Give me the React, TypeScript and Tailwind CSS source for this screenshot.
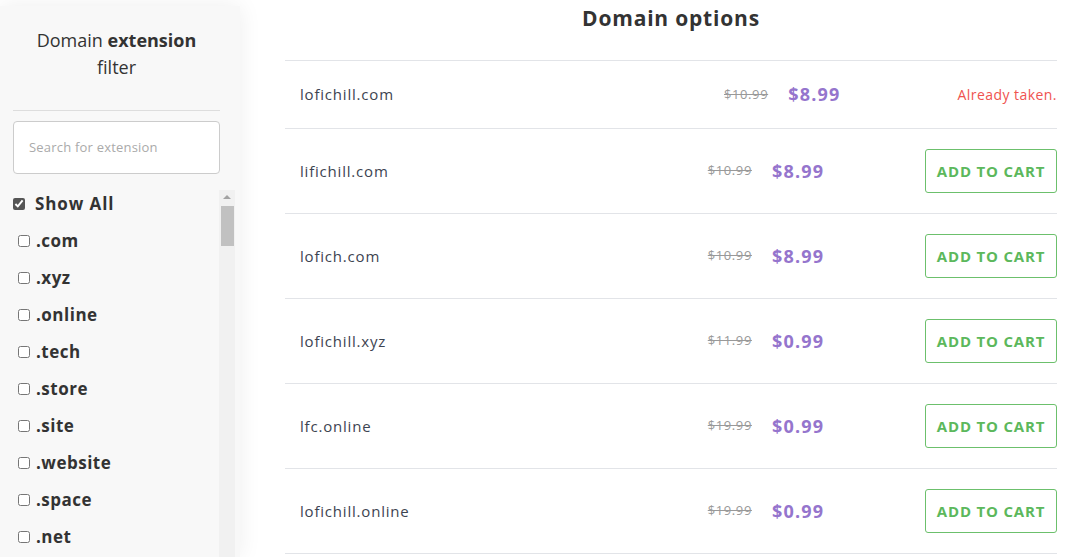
import React from "react";

const font = { fontFamily: '"Open Sans", "Liberation Sans", sans-serif' };

const exts = [".com", ".xyz", ".online", ".tech", ".store", ".site", ".website", ".space", ".net"];

const rows = [
  { name: "lofichill.com", old: "$10.99", price: "$8.99", taken: true },
  { name: "lifichill.com", old: "$10.99", price: "$8.99" },
  { name: "lofich.com", old: "$10.99", price: "$8.99" },
  { name: "lofichill.xyz", old: "$11.99", price: "$0.99" },
  { name: "lfc.online", old: "$19.99", price: "$0.99" },
  { name: "lofichill.online", old: "$19.99", price: "$0.99" },
];

export default function App() {
  return (
    <div className="flex h-[557px] w-[1075px] overflow-hidden bg-white text-[#333]" style={font}>
      <aside className="mt-[6px] flex w-[240px] shrink-0 flex-col bg-[#f8f8f8] shadow-[0_0_22px_rgba(0,0,0,0.07)]">
        <div className="pr-[7px]">
          <h2 className="pt-[21px] text-center text-[18px] leading-[27px] text-[#333]">
            Domain <b className="font-bold">extension</b>
            <br />
            filter
          </h2>
          <div className="mx-[13px] mt-[29px] border-t border-[#dddddd]" />
          <div className="mx-[13px] mt-[10px] flex h-[53px] items-center rounded-[4px] border border-[#cccccc] bg-white px-[15px] text-[13px] tracking-[0.2px] text-[#aaaaaa]">
            Search for extension
          </div>
        </div>
        <div className="mt-[16px] flex min-h-0 flex-1">
          <div className="-mt-[5px] flex-1 pl-[13px]">
            <label className="flex h-[37px] items-center gap-[10px]">
              <input type="checkbox" defaultChecked className="m-0 h-[12px] w-[12px] accent-[#555]" />
              <span className="text-[17px] font-bold tracking-[0.9px] text-[#333]">Show All</span>
            </label>
            {exts.map((e) => (
              <label key={e} className="flex h-[37px] items-center gap-[6px] pl-[5px]">
                <input type="checkbox" className="m-0 h-[12px] w-[12px]" />
                <span className="text-[17px] font-bold tracking-[0.5px] text-[#333]">{e}</span>
              </label>
            ))}
          </div>
          <div className="mr-[5px] flex w-[16px] flex-col items-center bg-[#f1f1f1]">
            <div className="mt-[5px] h-0 w-0 border-x-[4px] border-b-[4px] border-x-transparent border-b-[#a3a3a3]" />
            <div className="mt-[7px] h-[40px] w-[13px] bg-[#c1c1c1]" />
          </div>
        </div>
      </aside>

      <main className="ml-[45px] mr-[18px] flex-1">
        <h1 className="h-[60px] pt-[4px] text-center text-[21px] font-bold leading-[28px] tracking-[0.8px] text-[#333]">
          Domain options
        </h1>
        {rows.map((r) => (
          <div key={r.name} className="flex items-center border-t border-[#e2e4e8] py-[20px]">
            <div className="w-[322px] pl-[15px] text-[15px] leading-[27px] tracking-[0.8px] text-[#3d4451]">{r.name}</div>
            <div className="flex flex-1 items-center justify-center gap-[20px]">
              <span className="text-[13px] tracking-[0.6px] text-[#999] line-through">{r.old}</span>
              <span className="text-[18px] font-bold tracking-[1.2px] text-[#9575cd]">{r.price}</span>
            </div>
            {r.taken ? (
              <div className="text-[14px] leading-[27px] tracking-[0.45px] text-[#ef5350]">Already taken.</div>
            ) : (
              <button className="flex h-[44px] w-[132px] items-center justify-center rounded-[3px] border border-[#6cc06c] bg-white text-[15px] font-bold tracking-[0.8px] text-[#5cb85c]">
                ADD TO CART
              </button>
            )}
          </div>
        ))}
        <div className="border-t border-[#e2e4e8]" />
      </main>
    </div>
  );
}
